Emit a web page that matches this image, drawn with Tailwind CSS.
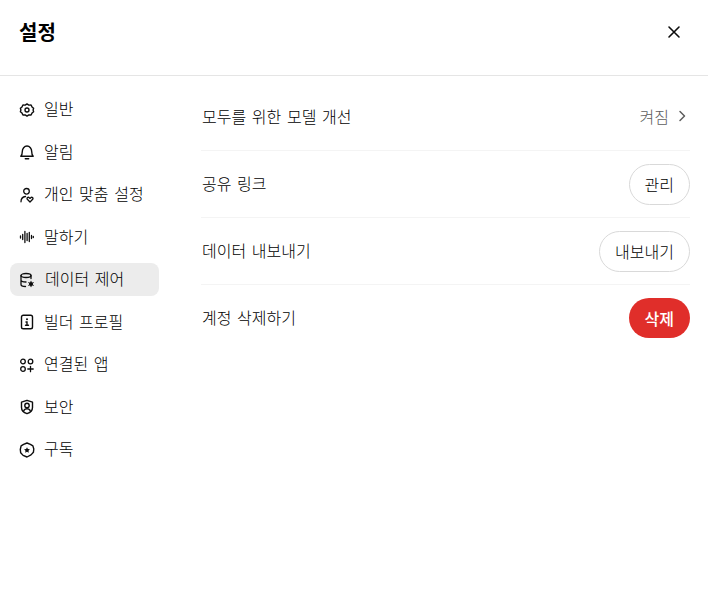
<!DOCTYPE html>
<html lang="ko">
	<head>
		<meta charset="UTF-8" />
		<title>설정</title>
		<script src="https://cdn.jsdelivr.net/npm/@tailwindcss/browser@4"></script>
	</head>
	<body class="bg-white text-black font-['Noto_Sans_CJK_KR','Liberation_Sans',sans-serif] [word-spacing:1.2px]">
		<div class="w-[708px] h-[615px] overflow-hidden flex flex-col">
			<header class="h-[76px] shrink-0 border-b border-[#e5e5e5] flex items-center justify-between pl-[19px] pr-[25px] pb-[12px]">
				<h1 class="text-xl leading-7 font-bold">설정</h1>
				<button class="w-[18px] h-[18px] flex items-center justify-center">
					<svg width="18" height="18" viewBox="0 0 18 18" fill="none" stroke="#0d0d0d" stroke-width="1.6" stroke-linecap="round"><path d="M4 4l10 10M14 4L4 14" /></svg>
				</button>
			</header>

			<div class="flex flex-1">
				<nav class="w-[149px] ml-[10px] mr-[42px] pt-[17px] flex flex-col gap-[9.5px] shrink-0 text-base font-light">
					<a class="h-[33px] pl-[9px] pb-[3px] flex items-center gap-[9px] rounded-lg">
						<svg class="mt-[3px]" width="16" height="16" viewBox="-0.8 -0.8 17.6 17.6" fill="none" stroke="#0d0d0d" stroke-width="1.5" stroke-linejoin="round"><path d="M8 1.300l2 1.300 2.500-.1 1 2.100 1.800 1.500L14.700 8l.6 1.900-1.800 1.500-1 2.100-2.500-.1-2 1.300-2-1.300-2.500.1-1-2.100L.7 9.900 1.300 8 .7 6.100l1.800-1.500 1-2.100 2.500.1z" /><circle cx="8" cy="8" r="2.200" /></svg>
						일반
					</a>
					<a class="h-[33px] pl-[9px] pb-[3px] flex items-center gap-[9px] rounded-lg">
						<svg class="mt-[3px]" width="16" height="16" viewBox="0 0 16 16" fill="none" stroke="#0d0d0d" stroke-width="1.400" stroke-linecap="round" stroke-linejoin="round"><path d="M1.800 12.300h12.400c-1.200-1.200-1.500-2.300-1.500-4.800 0-2.800-2-5.500-4.700-5.500S3.300 4.700 3.300 7.500c0 2.500-.3 3.600-1.500 4.800z" /><path d="M6.300 14.800h3.400" /></svg>
						알림
					</a>
					<a class="h-[33px] pl-[9px] pb-[3px] flex items-center gap-[9px] rounded-lg">
						<svg class="mt-[3px]" width="16" height="16" viewBox="0 0 16 16" fill="none" stroke="#0d0d0d" stroke-width="1.3" stroke-linecap="round" stroke-linejoin="round"><circle cx="7.500" cy="4.300" r="2.800" /><path d="M2 14.800c0-3 1.800-5 4.500-5.300" /><path d="M11 15l-2.700-2.700c-1-1.200.8-2.800 2-1.500l.7.600.7-.6c1.200-1.300 3 .3 2 1.500z" /></svg>
						개인 맞춤 설정
					</a>
					<a class="h-[33px] pl-[9px] pb-[3px] flex items-center gap-[9px] rounded-lg">
						<svg class="mt-[3px]" width="16" height="16" viewBox="0 0 16 16" fill="none" stroke="#0d0d0d" stroke-width="1.3" stroke-linecap="round"><path d="M1.500 7v2M3.700 5.500v5M5.900 2.500v11M8.100 4.500v7M10.300 3.500v9M12.500 6.500v3M14.300 7.500v1" /></svg>
						말하기
					</a>
					<a class="h-[33px] pl-[9px] pb-[3px] flex items-center gap-[10px] rounded-lg bg-[#ececec]">
						<svg class="mt-[3px]" width="16" height="16" viewBox="0 0 16 16" fill="none" stroke="#0d0d0d" stroke-width="1.3" stroke-linecap="round"><ellipse cx="7" cy="3.500" rx="5" ry="2" /><path d="M2 3.500v9c0 1.200 2 2 4.500 2M12 3.500v3M2 8c0 1.200 2.500 2 5 2" /><circle cx="12" cy="12" r="2" fill="#0d0d0d" stroke="none" /><path d="M12 9.300v5.400M9.700 10.700l4.600 2.600M14.300 10.700l-4.600 2.600" stroke-width="1" /></svg>
						데이터 제어
					</a>
					<a class="h-[33px] pl-[9px] pb-[3px] flex items-center gap-[9px] rounded-lg">
						<svg class="mt-[3px]" width="16" height="16" viewBox="0 0 16 16" fill="none" stroke="#0d0d0d" stroke-width="1.4" stroke-linecap="round"><rect x="2.500" y="1.300" width="11" height="13.400" rx="1.800" /><circle cx="8" cy="5.200" r="1" fill="#0d0d0d" stroke="none" /><path d="M7 8h1v3.300M6.500 11.300h3" /></svg>
						빌더 프로필
					</a>
					<a class="h-[33px] pl-[9px] pb-[3px] flex items-center gap-[9px] rounded-lg">
						<svg class="mt-[3px]" width="16" height="16" viewBox="0 0 16 16" fill="none" stroke="#0d0d0d" stroke-width="1.3" stroke-linecap="round"><circle cx="4" cy="4.500" r="2.300" /><circle cx="11.500" cy="4.500" r="2.300" /><circle cx="4" cy="12" r="2.300" /><path d="M11.500 9.300v5.400M8.800 12h5.400" /></svg>
						연결된 앱
					</a>
					<a class="h-[33px] pl-[9px] pb-[3px] flex items-center gap-[9px] rounded-lg">
						<svg class="mt-[3px]" width="16" height="16" viewBox="0 0 16 16" fill="none" stroke="#0d0d0d" stroke-width="1.4" stroke-linecap="round" stroke-linejoin="round"><path d="M8 1.300l5.500 1.900v5.300c0 3-2.400 5.200-5.500 6.200-3.100-1-5.500-3.200-5.500-6.200V3.200z" /><circle cx="8" cy="6.500" r="2.200" /><path d="M4.800 11.500c.8-1.200 1.900-1.800 3.200-1.800s2.400.6 3.200 1.800" /></svg>
						보안
					</a>
					<a class="h-[33px] pl-[9px] pb-[3px] flex items-center gap-[9px] rounded-lg">
						<svg class="mt-[3px]" width="16" height="16" viewBox="0 0 16 16" fill="none" stroke="#0d0d0d" stroke-width="1.4" stroke-linejoin="round"><path d="M8 1l3.400 1.400 2.500 1.500.9 3.100-.4 3.300-2.400 2.600L8 15l-3.900-1.600-2.400-2.600L1.300 7.500l.8-3.600 2.500-1.500z" /><path d="M8 5.200l.9 1.800 2 .3-1.400 1.400.3 2L8 9.800l-1.800.9.300-2-1.400-1.400 2-.3z" fill="#0d0d0d" stroke="none" /></svg>
						구독
					</a>
				</nav>

				<main class="w-[489px] shrink-0 pt-[8px] text-base font-light">
					<div class="h-[67px] pb-[2px] flex items-center justify-between border-b border-[#f4f4f4]">
						<span class="pb-[1px] pl-px">모두를 위한 모델 개선</span>
						<span class="flex items-center gap-[5px] text-[#5d5d5d]">
							켜짐
							<svg width="16" height="16" viewBox="0 0 16 16" fill="none" stroke="#5d5d5d" stroke-width="1.500" stroke-linecap="round" stroke-linejoin="round"><path d="M6 3.500L10.500 8 6 12.500" /></svg>
						</span>
					</div>
					<div class="h-[67px] flex items-center justify-between border-b border-[#f4f4f4]">
						<span class="pb-[3px] pl-px">공유 링크</span>
						<button class="h-[41px] px-[15px] pb-[1px] rounded-full border border-[#d9d9d9]">관리</button>
					</div>
					<div class="h-[67px] flex items-center justify-between border-b border-[#f4f4f4]">
						<span class="pb-[3px] pl-px">데이터 내보내기</span>
						<button class="h-[41px] px-[15px] pb-[1px] rounded-full border border-[#d9d9d9]">내보내기</button>
					</div>
					<div class="h-[66px] flex items-center justify-between">
						<span class="pb-[3px] pl-px">계정 삭제하기</span>
						<button class="h-[40px] px-4 pb-[1px] rounded-full bg-[#e02e2a] text-white font-medium">삭제</button>
					</div>
				</main>
			</div>
		</div>
	</body>
</html>
